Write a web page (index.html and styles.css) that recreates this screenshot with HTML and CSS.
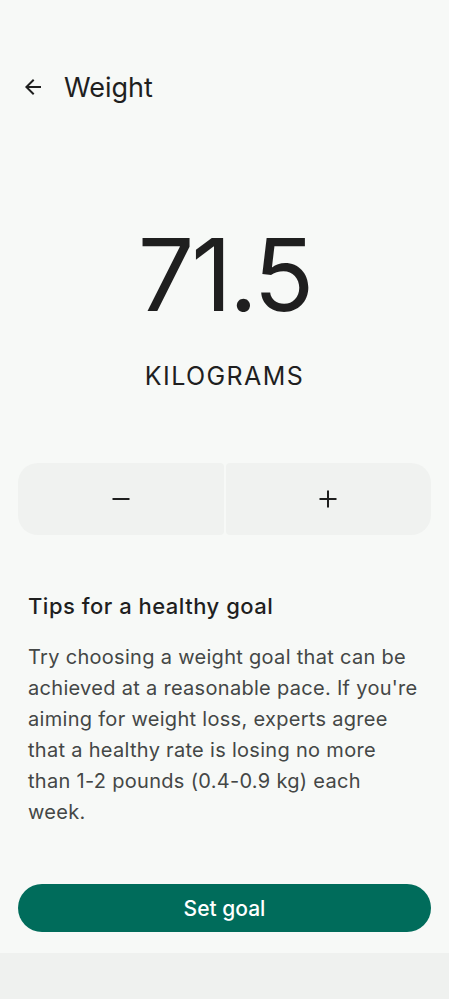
FILE: index.html
```html
<!DOCTYPE html>
<html>
<head>
<meta charset="utf-8">
<link rel="stylesheet" href="styles.css">
</head>
<body>
<div class="screen">
  <header class="topbar">
    <svg class="back" viewBox="0 0 24 24" width="24" height="24"><path d="M20 11H7.83l5.59-5.59L12 4l-8 8 8 8 1.41-1.41L7.83 13H20v-2z" fill="#1f1f1f"/></svg>
    <h1 class="title">Weight</h1>
  </header>
  <section class="value">
    <div class="number">71.5</div>
    <div class="unit">KILOGRAMS</div>
  </section>
  <div class="stepper">
    <button class="step left"><svg viewBox="0 0 24 24" width="24" height="24"><path d="M3.5 11h17v2h-17z" fill="#1f1f1f"/></svg></button>
    <button class="step right"><svg viewBox="0 0 24 24" width="24" height="24"><path d="M11 3.5h2V11h7.5v2H13v7.5h-2V13H3.5v-2H11z" fill="#1f1f1f"/></svg></button>
  </div>
  <section class="tips">
    <h2 class="tips-title">Tips for a healthy goal</h2>
    <p class="tips-text">Try choosing a weight goal that can be<br>achieved at a reasonable pace. If you're<br>aiming for weight loss, experts agree<br>that a healthy rate is losing no more<br>than 1-2 pounds (0.4-0.9 kg) each<br>week.</p>
  </section>
  <div class="spacer"></div>
  <button class="primary">Set goal</button>
</div>
<div class="navbar"></div>
</body>
</html>
```
FILE: styles.css
```css
html, body { margin: 0; padding: 0; }
body {
  background: #f7f9f7;
  font-family: "Inter", "Roboto", sans-serif;
  color: #1f1f1f;
  width: 449px;
  height: 999px;
  display: flex;
  flex-direction: column;
}
.screen {
  flex: 1;
  display: flex;
  flex-direction: column;
  padding: 0 18px 21px 18px;
}
.topbar {
  display: flex;
  align-items: center;
  height: 56px;
  margin-top: 59px;
  padding-left: 3px;
}
.back { width: 24px; height: 24px; }
.title {
  margin: 0 0 0 19px;
  font-size: 27px;
  font-weight: 400;
}
.value {
  display: flex;
  flex-direction: column;
  align-items: center;
  margin-top: 110px;
}
.number {
  font-size: 100px;
  line-height: 100px;
  font-weight: 400;
  letter-spacing: -3px;
}
.unit {
  margin-top: 34px;
  font-size: 25px;
  line-height: 34px;
  letter-spacing: 1.4px;
}
.stepper {
  display: flex;
  gap: 2px;
  margin-top: 70px;
  height: 72px;
}
.step {
  flex: 1;
  border: none;
  background: #f0f2f0;
  display: flex;
  align-items: center;
  justify-content: center;
  padding: 0;
}
.step.left { border-radius: 20px 4px 4px 20px; }
.step.right { border-radius: 4px 20px 20px 4px; }
.tips { padding: 0 10px; margin-top: 57px; }
.tips-title {
  margin: 0;
  font-size: 22px;
  line-height: 28px;
  font-weight: 500;
  letter-spacing: 0.5px;
}
.tips-text {
  margin: 22px 0 0 0;
  font-size: 20px;
  line-height: 31px;
  letter-spacing: 0.3px;
  color: #444746;
  white-space: nowrap;
}
.spacer { flex: 1; }
.primary {
  height: 48px;
  border: none;
  border-radius: 24px;
  background: #006c5b;
  color: #ffffff;
  font-family: "Inter", "Roboto", sans-serif;
  font-size: 21px;
  font-weight: 500;
}
.navbar {
  height: 46px;
  background: #eff1ef;
}
```
